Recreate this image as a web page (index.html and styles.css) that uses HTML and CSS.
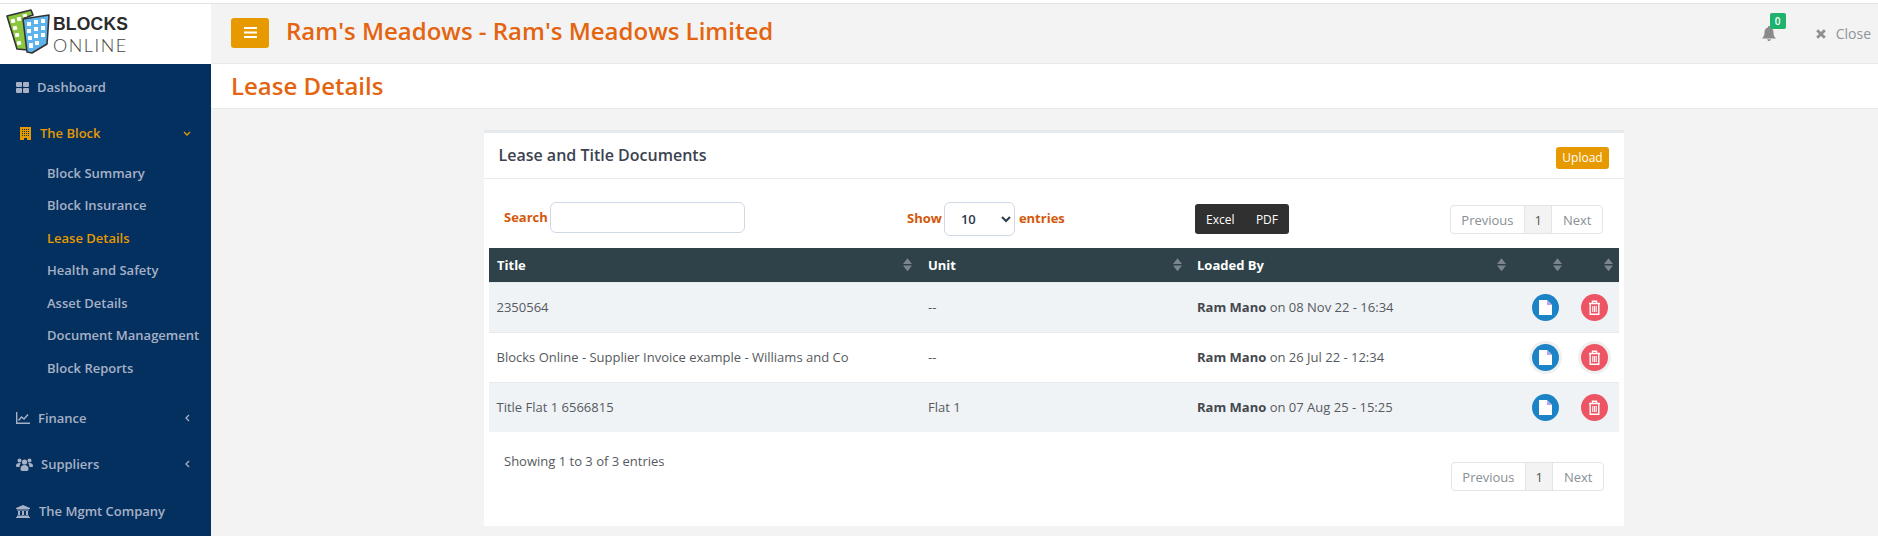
FILE: index.html
```html
<!DOCTYPE html>
<html lang="en">
<head>
<meta charset="utf-8">
<title>Lease Details</title>
<link rel="stylesheet" href="styles.css">
</head>
<body>
<div class="app">
  <aside class="sidebar">
    <div class="logo">
      <svg class="logo-mark" viewBox="0 0 44 45" width="44" height="45">
        <path d="M1 7 L25 1 L27 6 L18 9 L22 41 L11 40 Z" fill="#8cc63f" stroke="#333" stroke-width="1.600" stroke-linejoin="round"/>
        <g fill="#fff"><rect x="5" y="10" width="4" height="4" transform="rotate(-12 7 12)"/><rect x="11" y="8" width="4" height="4" transform="rotate(-12 13 10)"/><rect x="17" y="5" width="4" height="3" transform="rotate(-12 19 7)"/><rect x="7" y="17" width="4" height="4" transform="rotate(-12 9 19)"/><rect x="9" y="24" width="4" height="4" transform="rotate(-12 11 26)"/><rect x="11" y="32" width="4" height="4" transform="rotate(-12 13 34)"/></g>
        <path d="M17 10 L43 6 L41 35 L26 44 L21 43 Z" fill="#5db3ec" stroke="#333" stroke-width="1.600" stroke-linejoin="round"/>
        <g fill="#fff"><rect x="21" y="13" width="4" height="4"/><rect x="28" y="11" width="4" height="4"/><rect x="35" y="10" width="4" height="4"/><rect x="21" y="20" width="4" height="4"/><rect x="28" y="18" width="4" height="4"/><rect x="35" y="17" width="4" height="4"/><rect x="22" y="27" width="4" height="4"/><rect x="28" y="25" width="4" height="4"/><rect x="35" y="24" width="4" height="4"/><rect x="23" y="34" width="4" height="5"/><rect x="29" y="32" width="4" height="4"/></g>
      </svg>
      <div class="logo-text"><span class="logo-top">BLOCKS</span><span class="logo-bottom">ONLINE</span></div>
    </div>
    <nav class="nav">
      <a class="nav-item">
        <svg class="nav-icon" viewBox="0 0 13 11" width="13" height="11"><g fill="currentColor"><rect width="6" height="5" rx="1"/><rect x="7" width="6" height="5" rx="1"/><rect y="6" width="6" height="5" rx="1"/><rect x="7" y="6" width="6" height="5" rx="1"/></g></svg>
        <span>Dashboard</span>
      </a>
      <a class="nav-item active block-item">
        <svg class="nav-icon" viewBox="0 0 11 13" width="11" height="13"><path fill="currentColor" fill-rule="evenodd" d="M0 0h11v13H7v-2H4v2H0zM2 2v1h1V2zm2 0v1h1V2zm2 0v1h1V2zm2 0v1h1V2zM2 4v1h1V4zm2 0v1h1V4zm2 0v1h1V4zm2 0v1h1V4zM2 6v1h1V6zm2 0v1h1V6zm2 0v1h1V6zm2 0v1h1V6zM2 8v1h1V8zm2 0v1h1V8zm2 0v1h1V8zm2 0v1h1V8z"/></svg>
        <span>The Block</span>
        <svg class="chev" viewBox="0 0 8 5" width="8" height="5"><path d="M1 1l3 3 3-3" fill="none" stroke="currentColor" stroke-width="1.300"/></svg>
      </a>
      <ul class="subnav">
        <li>Block Summary</li>
        <li>Block Insurance</li>
        <li class="current">Lease Details</li>
        <li>Health and Safety</li>
        <li>Asset Details</li>
        <li>Document Management</li>
        <li>Block Reports</li>
      </ul>
      <a class="nav-item">
        <svg class="nav-icon" viewBox="0 0 14 12" width="14" height="12"><path d="M.7 0v11.300H14" fill="none" stroke="currentColor" stroke-width="1.400"/><path d="M2.500 8.500l3-3.500 2.500 2 4-4.500" fill="none" stroke="currentColor" stroke-width="1.500"/></svg>
        <span>Finance</span>
        <svg class="chev" viewBox="0 0 5 8" width="5" height="8"><path d="M4 1L1 4l3 3" fill="none" stroke="currentColor" stroke-width="1.300"/></svg>
      </a>
      <a class="nav-item">
        <svg class="nav-icon" viewBox="0 0 17 13" width="17" height="13"><g fill="currentColor"><circle cx="3.500" cy="2.500" r="2"/><circle cx="13.500" cy="2.500" r="2"/><circle cx="8.500" cy="4" r="2.600"/><path d="M0 8c0-2 1-3 3.500-3 .8 0 1 .2 1.300.5C4 6.500 3.600 7.500 3.500 9H1C.5 9 0 8.800 0 8zM17 8c0-2-1-3-3.500-3-.8 0-1 .2-1.300.5.8 1 1.200 2 1.300 3.500h2.500c.5 0 1-.2 1-1zM4.500 11c0-3 1.500-4 4-4s4 1 4 4c0 1.200-.6 2-1.500 2H6c-.9 0-1.500-.8-1.500-2z"/></g></svg>
        <span>Suppliers</span>
        <svg class="chev" viewBox="0 0 5 8" width="5" height="8"><path d="M4 1L1 4l3 3" fill="none" stroke="currentColor" stroke-width="1.300"/></svg>
      </a>
      <a class="nav-item nav-last">
        <svg class="nav-icon" viewBox="0 0 14 13" width="14" height="13"><path fill="currentColor" d="M7 0l7 3v1H0V3zM1 4.500h12v1H1zM2 6h2v4H2zM6 6h2v4H6zM10 6h2v4h-2zM1 10.500h12V12H1zM0 12h14v1H0z"/></svg>
        <span>The Mgmt Company</span>
      </a>
    </nav>
  </aside>
  <main class="main">
    <header class="topbar">
      <button class="menu-btn" type="button" aria-label="Menu">
        <svg viewBox="0 0 13 11" width="13" height="11"><path fill="#fff" d="M0 0h13v2H0zM0 4.500h13v2H0zM0 9h13v2H0z"/></svg>
      </button>
      <h1 class="site-title">Ram's Meadows - Ram's Meadows Limited</h1>
      <div class="top-actions">
        <div class="bell">
          <svg viewBox="0 0 14 15" width="14" height="15"><path fill="#8a8a8a" d="M7 0c.6 0 1 .4 1 1v.6c2.300.5 3.500 2.300 3.500 4.900 0 3 .8 4.500 2.500 6H0c1.700-1.500 2.500-3 2.500-6 0-2.600 1.200-4.400 3.500-4.900V1c0-.6.400-1 1-1zM5.200 13.200h3.600C8.600 14.300 7.900 15 7 15s-1.600-.7-1.800-1.800z"/></svg>
          <span class="badge">0</span>
        </div>
        <div class="close-link">
          <svg viewBox="0 0 10 10" width="10" height="10"><path fill="none" stroke="#8f8f8f" stroke-width="2.800" d="M1.200 1.200l7.600 7.600M8.800 1.200L1.200 8.800"/></svg>
          <span>Close</span>
        </div>
      </div>
    </header>
    <div class="page-heading"><h2>Lease Details</h2></div>
    <div class="content">
      <section class="card">
        <div class="card-title">
          <h5>Lease and Title Documents</h5>
          <button class="upload" type="button">Upload</button>
        </div>
        <div class="card-body">
          <div class="controls">
            <div class="ctl ctl-search"><label class="ctl-label">Search</label><input class="search" type="text"></div>
            <div class="ctl ctl-show"><span class="ctl-label">Show</span>
              <select class="length"><option>10</option></select>
              <span class="ctl-label">entries</span></div>
            <div class="ctl"><div class="export"><span>Excel</span><span>PDF</span></div></div>
            <div class="ctl ctl-pager">
              <div class="pager"><span>Previous</span><span class="on">1</span><span>Next</span></div>
            </div>
          </div>
          <table class="docs">
            <colgroup><col class="c1"><col class="c2"><col class="c3"><col class="c4"><col class="c5"></colgroup>
            <thead>
              <tr>
                <th><div class="th"><span>Title</span><i class="sort"></i></div></th>
                <th><div class="th"><span>Unit</span><i class="sort"></i></div></th>
                <th><div class="th"><span>Loaded By</span><i class="sort"></i></div></th>
                <th><div class="th"><span></span><i class="sort"></i></div></th>
                <th><div class="th"><span></span><i class="sort"></i></div></th>
              </tr>
            </thead>
            <tbody>
              <tr>
                <td>2350564</td><td>--</td><td><b>Ram Mano</b> on 08 Nov 22 - 16:34</td>
                <td class="act"><span class="round blue"><svg viewBox="0 0 13 15" width="13" height="15"><path fill="#fff" d="M0 0h8l5 5v10H0z"/><path fill="#b9a5ea" d="M8 0l5 5H8z"/></svg></span></td>
                <td class="act"><span class="round red"><svg viewBox="0 0 13 15" width="13" height="15"><path fill="none" stroke="#fff" stroke-width="1.400" d="M1 3.500h11M4.500 3.500V1.200h4v2.300M2.200 3.500v10.800h8.600V3.500"/><path stroke="#fff" stroke-width="1.100" d="M4.800 6v6M6.500 6v6M8.200 6v6"/></svg></span></td>
              </tr>
              <tr class="hov">
                <td>Blocks Online - Supplier Invoice example - Williams and Co</td><td>--</td><td><b>Ram Mano</b> on 26 Jul 22 - 12:34</td>
                <td class="act"><span class="round blue"><svg viewBox="0 0 13 15" width="13" height="15"><path fill="#fff" d="M0 0h8l5 5v10H0z"/><path fill="#b9a5ea" d="M8 0l5 5H8z"/></svg></span></td>
                <td class="act"><span class="round red"><svg viewBox="0 0 13 15" width="13" height="15"><path fill="none" stroke="#fff" stroke-width="1.400" d="M1 3.500h11M4.500 3.500V1.200h4v2.300M2.200 3.500v10.800h8.600V3.500"/><path stroke="#fff" stroke-width="1.100" d="M4.800 6v6M6.500 6v6M8.200 6v6"/></svg></span></td>
              </tr>
              <tr>
                <td>Title Flat 1 6566815</td><td>Flat 1</td><td><b>Ram Mano</b> on 07 Aug 25 - 15:25</td>
                <td class="act"><span class="round blue"><svg viewBox="0 0 13 15" width="13" height="15"><path fill="#fff" d="M0 0h8l5 5v10H0z"/><path fill="#b9a5ea" d="M8 0l5 5H8z"/></svg></span></td>
                <td class="act"><span class="round red"><svg viewBox="0 0 13 15" width="13" height="15"><path fill="none" stroke="#fff" stroke-width="1.400" d="M1 3.500h11M4.500 3.500V1.200h4v2.300M2.200 3.500v10.800h8.600V3.500"/><path stroke="#fff" stroke-width="1.100" d="M4.800 6v6M6.500 6v6M8.200 6v6"/></svg></span></td>
              </tr>
            </tbody>
          </table>
          <div class="table-foot">
            <div class="info">Showing 1 to 3 of 3 entries</div>
            <div class="pager"><span>Previous</span><span class="on">1</span><span>Next</span></div>
          </div>
        </div>
      </section>
    </div>
  </main>
</div>
</body>
</html>
```

FILE: styles.css
```css
* { box-sizing: border-box; }
html, body { margin: 0; padding: 0; height: 100%; overflow: hidden; background: #fff; }
body { font-family: "Open Sans", sans-serif; font-size: 13px; color: #555a60; }
.app { display: flex; height: 533px; margin-top: 3px; border-top: 1px solid #e2e2e2; }
.sidebar { width: 211px; flex: none; background: #04305f; color: #a7b1c6; }
.logo { height: 60px; background: #fff; display: flex; align-items: flex-start; padding: 5px 0 0 6px; }
.logo-mark { flex: none; }
.logo-text { display: flex; flex-direction: column; margin: 5px 0 0 3px; line-height: 21px; color: #2b2b2b; }
.logo-top { font-family: "Liberation Sans", sans-serif; font-weight: 700; font-size: 17.500px; letter-spacing: .2px; }
.logo-bottom { font-family: "Lato", sans-serif; font-weight: 300; font-size: 18px; letter-spacing: 1.500px; color: #444; }
.nav-item { display: flex; align-items: center; height: 46px; padding-left: 16px; font-weight: 600; font-size: 13px; }
.nav-icon { flex: none; margin-right: 8px; }
.nav-last { margin-top: 1px; }
.nav-last .nav-icon { margin-right: 9px; }
.chev { margin-left: auto; margin-right: 21px; }
.block-item { padding-left: 20px; }
.block-item .nav-icon { margin-right: 9px; }
.block-item .chev { margin-right: 20px; }
.active { color: #e69a00; }
.subnav { list-style: none; margin: 0; padding: .5px 0 10.500px 47px; }
.subnav li { height: 32.600px; line-height: 33px; font-weight: 600; font-size: 13px; white-space: nowrap; }
.subnav .current { color: #e69a00; }
.main { flex: 1; min-width: 0; display: flex; flex-direction: column; background: #f3f3f4; }
.topbar { height: 60px; flex: none; display: flex; align-items: center; padding: 0 7px 2px 20px; border-bottom: 1px solid #e7eaec; background: #f3f3f4; }
.menu-btn { width: 38px; height: 30px; border: 0; border-radius: 3px; background: #e69a00; display: flex; align-items: center; justify-content: center; padding: 0; }
.site-title { margin: 0 0 0 17px; padding-bottom: 4px; font-size: 24px; font-weight: 600; color: #e4640f; white-space: nowrap; }
.top-actions { margin-left: auto; margin-top: 2px; display: flex; align-items: center; }
.bell { position: relative; display: flex; margin-right: 40px; }
.badge { position: absolute; left: 8px; top: -13px; width: 16px; height: 16px; background: #1fb26b; color: #fff; border-radius: 2px; font-size: 10px; font-weight: 600; line-height: 16px; text-align: center; }
.close-link { display: flex; align-items: center; gap: 10px; color: #8f9498; font-size: 14px; }
.page-heading { height: 45px; flex: none; background: #fff; border-bottom: 1px solid #e7eaec; padding: 0 0 1px 20px; display: flex; align-items: center; }
.page-heading h2 { margin: 0; font-size: 24px; font-weight: 600; color: #e4640f; }
.content { flex: 1; padding: 21px 254px 0 273px; min-height: 0; }
.card { width: 1140px; height: 396px; background: #fff; border-top: 3px solid #e7eaec; }
.card-title { height: 46px; display: flex; align-items: center; justify-content: space-between; padding: 0 15px 0 14.500px; border-bottom: 1px solid #e7eaec; }
.card-title h5 { margin: 0 0 2px; font-size: 16px; font-weight: 600; color: #3c4250; }
.upload { width: 53px; height: 22px; margin-top: 4px; padding: 0; border: 0; border-radius: 3px; background: #e69a00; color: #fff; font: 12px "Open Sans", sans-serif; }
.card-body { padding: 0 5px; }
.controls { display: grid; grid-template-columns: 403px 288px 1fr auto; height: 69px; padding: 23px 16px 0 15px; }
.ctl { display: flex; align-items: flex-start; }
.ctl-label { color: #d4580a; font-size: 13px; font-weight: 700; white-space: nowrap; }
.ctl-search .ctl-label { margin-top: 6px; margin-right: 2px; }
.search { width: 195px; height: 31px; border: 1px solid #cfd8e6; border-radius: 6px; background: #fff; }
.ctl-show .ctl-label { margin-top: 7px; }
.length { width: 71px; height: 34px; margin: 0 4px 0 2px; border: 1px solid #cfd8e6; border-radius: 6px; background: #fff; font: 600 13px "Open Sans", sans-serif; color: #2d3a4a; padding-left: 12px; }
.export { display: flex; width: 94px; height: 30px; margin-top: 2px; background: #303030; color: #fff; border-radius: 3px; font-size: 12px; align-items: center; justify-content: space-between; padding: 0 11px; }
.pager { display: inline-flex; height: 29px; margin-top: 3px; border: 1px solid #e3e4e6; border-radius: 4px; color: #888f95; font-size: 13px; background: #fff; }
.pager span { display: flex; align-items: center; padding: 0 10.500px; }
.pager .on { background: #f3f3f4; color: #555; border-left: 1px solid #e3e4e6; border-right: 1px solid #e3e4e6; padding: 0 9.500px; }
.docs { width: 1130px; table-layout: fixed; border-collapse: collapse; font-size: 13px; }
.c1 { width: 431px; } .c2 { width: 269px; } .c3 { width: 323px; } .c4 { width: 56px; } .c5 { width: 51px; }
.docs thead tr { background: #2f4249; color: #fff; height: 34px; }
.docs th { padding: 0 3px 0 8px; text-align: left; font-weight: 700; font-size: 13px; }
.docs th:nth-child(1) { padding-right: 5px; }
.docs th:nth-child(2) { padding-right: 4px; }
.th { display: flex; align-items: center; justify-content: space-between; }
.sort { display: block; width: 9px; height: 13px; flex: none; margin-right: 3px; clip-path: polygon(50% 0, 100% 45%, 0 45%, 50% 0, 50% 100%, 0 55%, 100% 55%, 50% 100%); background-color: #7a868b; }
.docs td { height: 50px; padding: 0 8px 0 7.500px; border-top: 1px solid #e7eaec; white-space: nowrap; }
.docs td:nth-child(2), .docs td:nth-child(3) { padding-left: 8px; }
.docs tbody tr:nth-child(odd) { background: #f0f3f6; }
.docs b { font-weight: 700; color: #44484e; }
.docs td.act { padding: 0 11px 0 0; text-align: right; }
.docs td:nth-child(4).act { padding-right: 9px; }
.round { display: inline-flex; width: 27px; height: 27px; border-radius: 50%; align-items: center; justify-content: center; vertical-align: middle; }
.blue { background: #1c84c6; }
.red { background: #ed5565; }
.hov .round { box-shadow: 0 0 0 3px #f0f0f1; }
.table-foot { display: flex; justify-content: space-between; padding: 20px 15px 0 15px; }
.info { font-size: 13px; line-height: 18px; }
.table-foot .pager { margin-top: 10px; }
```
